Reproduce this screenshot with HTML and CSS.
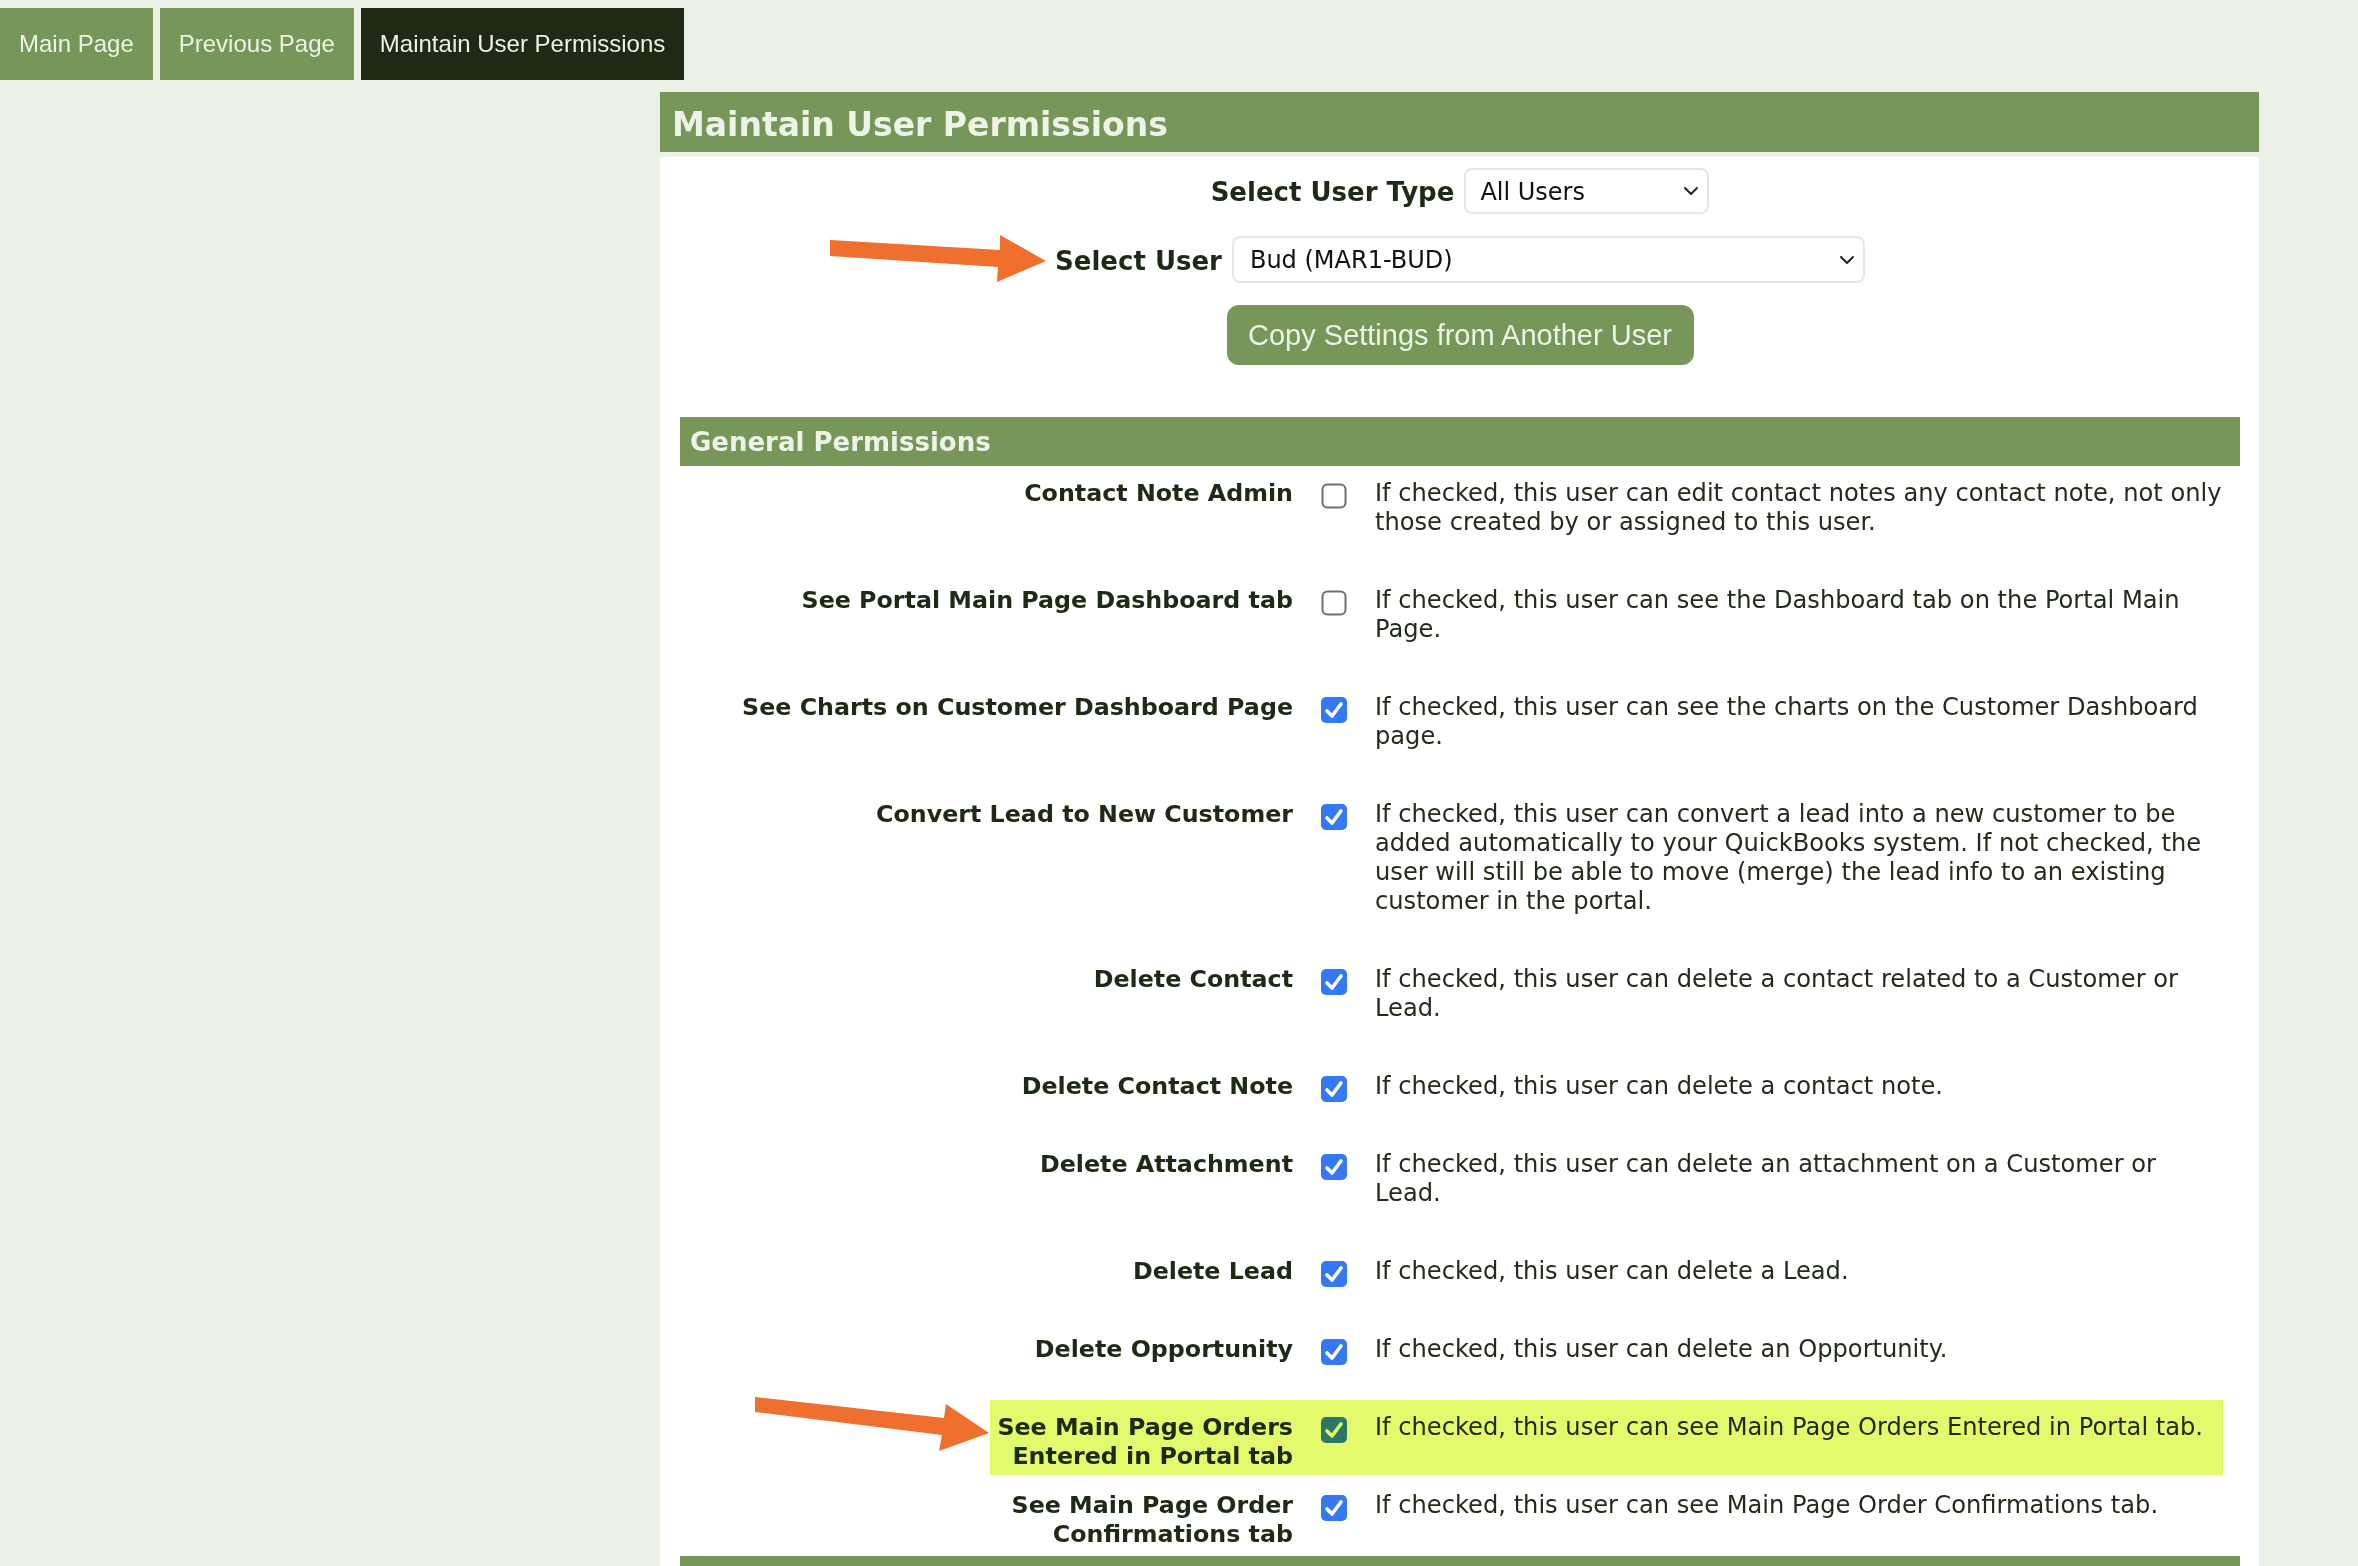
FILE: index.html
```html
<!DOCTYPE html>
<html>
  <head>
    <meta charset="utf-8" />
    <title>Maintain User Permissions</title>
    <link rel="stylesheet" href="styles.css">
  </head>
  <body>
    <svg class="defs" aria-hidden="true">
      <symbol id="box-on" viewBox="0 0 26 26">
        <rect x="0" y="0" width="26" height="26" rx="5" fill="#3478f6"/>
        <path d="M6 14l5 5 9-12" fill="none" stroke="#fff" stroke-width="3.6" stroke-linecap="round" stroke-linejoin="round"/>
      </symbol>
      <symbol id="box-off" viewBox="0 0 26 26">
        <rect x="1.5" y="1.5" width="23" height="23" rx="5" fill="#fff" stroke="#6e6e6e" stroke-width="2"/>
      </symbol>
      <symbol id="chevron" viewBox="0 0 16 10">
        <path d="M2 2l6 6 6-6" fill="none" stroke="#222" stroke-width="2" stroke-linecap="round" stroke-linejoin="round"/>
      </symbol>
    </svg>

    <div id="tabs">
      <a class="tab" href="#">Main Page</a>
      <a class="tab" href="#">Previous Page</a>
      <a class="tab current" href="#">Maintain User Permissions</a>
    </div>

    <div id="panel">
      <h1 class="panel-title">Maintain User Permissions</h1>
      <div class="panel-body">
        <div class="user-form">
          <div class="field">
            <label>Select User Type</label>
            <div class="select type">
              All Users
              <svg class="chev"><use href="#chevron"/></svg>
            </div>
          </div>
          <div class="field">
            <label>Select User</label>
            <div class="select user">
              Bud (MAR1-BUD)
              <svg class="chev"><use href="#chevron"/></svg>
            </div>
          </div>
          <button class="copy-btn">Copy Settings from Another User</button>
        </div>

        <div class="section">
          <div class="section-bar">General Permissions</div>

          <div class="perm">
            <div class="perm-name">Contact Note Admin</div>
            <div class="perm-check"><svg><use href="#box-off"/></svg></div>
            <div class="perm-desc">If checked, this user can edit contact notes any contact note, not only those created by or assigned to this user.</div>
          </div>
          <div class="perm">
            <div class="perm-name">See Portal Main Page Dashboard tab</div>
            <div class="perm-check"><svg><use href="#box-off"/></svg></div>
            <div class="perm-desc">If checked, this user can see the Dashboard tab on the Portal Main Page.</div>
          </div>
          <div class="perm">
            <div class="perm-name">See Charts on Customer Dashboard Page</div>
            <div class="perm-check"><svg><use href="#box-on"/></svg></div>
            <div class="perm-desc">If checked, this user can see the charts on the Customer Dashboard page.</div>
          </div>
          <div class="perm">
            <div class="perm-name">Convert Lead to New Customer</div>
            <div class="perm-check"><svg><use href="#box-on"/></svg></div>
            <div class="perm-desc">If checked, this user can convert a lead into a new customer to be added automatically to your QuickBooks system. If not checked, the user will still be able to move (merge) the lead info to an existing customer in the portal.</div>
          </div>
          <div class="perm">
            <div class="perm-name">Delete Contact</div>
            <div class="perm-check"><svg><use href="#box-on"/></svg></div>
            <div class="perm-desc">If checked, this user can delete a contact related to a Customer or Lead.</div>
          </div>
          <div class="perm">
            <div class="perm-name">Delete Contact Note</div>
            <div class="perm-check"><svg><use href="#box-on"/></svg></div>
            <div class="perm-desc">If checked, this user can delete a contact note.</div>
          </div>
          <div class="perm">
            <div class="perm-name">Delete Attachment</div>
            <div class="perm-check"><svg><use href="#box-on"/></svg></div>
            <div class="perm-desc">If checked, this user can delete an attachment on a Customer or Lead.</div>
          </div>
          <div class="perm">
            <div class="perm-name">Delete Lead</div>
            <div class="perm-check"><svg><use href="#box-on"/></svg></div>
            <div class="perm-desc">If checked, this user can delete a Lead.</div>
          </div>
          <div class="perm">
            <div class="perm-name">Delete Opportunity</div>
            <div class="perm-check"><svg><use href="#box-on"/></svg></div>
            <div class="perm-desc">If checked, this user can delete an Opportunity.</div>
          </div>
          <div class="perm marked">
            <div class="perm-name">See Main Page Orders<br>Entered in Portal tab</div>
            <div class="perm-check"><svg><use href="#box-on"/></svg></div>
            <div class="perm-desc">If checked, this user can see Main Page Orders Entered in Portal tab.</div>
          </div>
          <div class="perm">
            <div class="perm-name">See Main Page Order<br>Confirmations tab</div>
            <div class="perm-check"><svg><use href="#box-on"/></svg></div>
            <div class="perm-desc">If checked, this user can see Main Page Order Confirmations tab.</div>
          </div>
        </div>

        <div class="section-bar next"></div>
      </div>
    </div>

    <!-- callout arrows -->
    <svg class="pointer pointer-user" width="225" height="56" viewBox="0 0 225 56">
      <polygon points="4,10 174,20 174,5 220,31 171,52 172,37 4,26" fill="#ef6f2e"/>
    </svg>
    <svg class="pointer pointer-orders" width="245" height="64" viewBox="0 0 245 64">
      <polygon points="5,5 194,26 196,12 239,41 189,59 192,43 5,20" fill="#ef6f2e"/>
    </svg>
  </body>
</html>
```

FILE: styles.css
```css
*{
  box-sizing: border-box;
}
html{
  overflow: hidden;
}
body{
  margin: 0;
  background-color: #ebf1e6;
  font-family: "DejaVu Sans", Verdana, sans-serif;
  color: #1e2a15;
}
.defs{
  position: absolute;
  width: 0;
  height: 0;
}

/* top tabs */
#tabs{
  display: flex;
  gap: 7px;
  padding-top: 8px;
}
.tab{
  font-family: "Liberation Sans", Arial, sans-serif;
  font-size: 24px;
  line-height: 28px;
  padding: 22px 19px;
  background-color: #76965a;
  color: #eef3e6;
  text-decoration: none;
}
.tab.current{
  background-color: #1f2a16;
}

/* main panel */
#panel{
  width: 1599px;
  margin: 12px 0 0 660px;
}
.panel-title{
  margin: 0;
  height: 60px;
  padding: 6px 0 0 12px;
  background-color: #76965a;
  color: #eef3e8;
  font-size: 33px;
  line-height: 54px;
}
.panel-body{
  margin-top: 5px;
  padding: 11px 19px 0 20px;
  background-color: white;
  min-height: 1500px;
}

/* user pickers */
.user-form{
  display: flex;
  flex-direction: column;
  align-items: center;
  gap: 22px;
}
.field{
  display: flex;
  align-items: center;
  gap: 10px;
}
.field label{
  font-size: 26px;
  font-weight: bold;
  padding-top: 2px;
}
.select{
  position: relative;
  height: 46px;
  padding: 0 40px 0 14px;
  border: 2px solid #e3eadd;
  border-radius: 8px;
  background-color: white;
  color: #111;
  font-size: 24px;
  line-height: 44px;
}
.select.type{
  width: 245px;
}
.select.user{
  width: 633px;
  height: 47px;
  padding-left: 16px;
}
.chev{
  position: absolute;
  right: 8px;
  top: 50%;
  width: 16px;
  height: 10px;
  margin-top: -5px;
}
.copy-btn{
  width: 467px;
  height: 60px;
  border: none;
  border-radius: 12px;
  background-color: #76965a;
  color: #eef3e6;
  font-family: "Liberation Sans", Arial, sans-serif;
  font-size: 29px;
  cursor: pointer;
}

/* permission list */
.section{
  margin-top: 52px;
}
.section-bar{
  height: 49px;
  padding: 2px 0 0 10px;
  background-color: #76965a;
  color: #eef3e8;
  font-size: 26px;
  font-weight: bold;
  line-height: 47px;
}
.perm{
  position: relative;
  display: grid;
  grid-template-columns: 1fr 26px 849px;
  column-gap: 28px;
  padding: 13px 16px 7px 0;
}
.perm-name{
  text-align: right;
  font-size: 23.75px;
  font-weight: bold;
  line-height: 29px;
}
.perm-check svg{
  display: block;
  width: 26px;
  height: 26px;
  margin-top: 4px;
}
.perm-desc{
  padding-bottom: 29px;
  color: #232c1b;
  font-size: 24.15px;
  line-height: 29px;
}
.perm.marked::after{
  content: "";
  position: absolute;
  left: 310px;
  right: 17px;
  top: 0;
  bottom: 3px;
  background-color: #e2fa6b;
  mix-blend-mode: multiply;
  pointer-events: none;
}

.pointer{
  position: absolute;
}
.pointer-user{
  left: 826px;
  top: 230px;
}
.pointer-orders{
  left: 750px;
  top: 1392px;
}
```
